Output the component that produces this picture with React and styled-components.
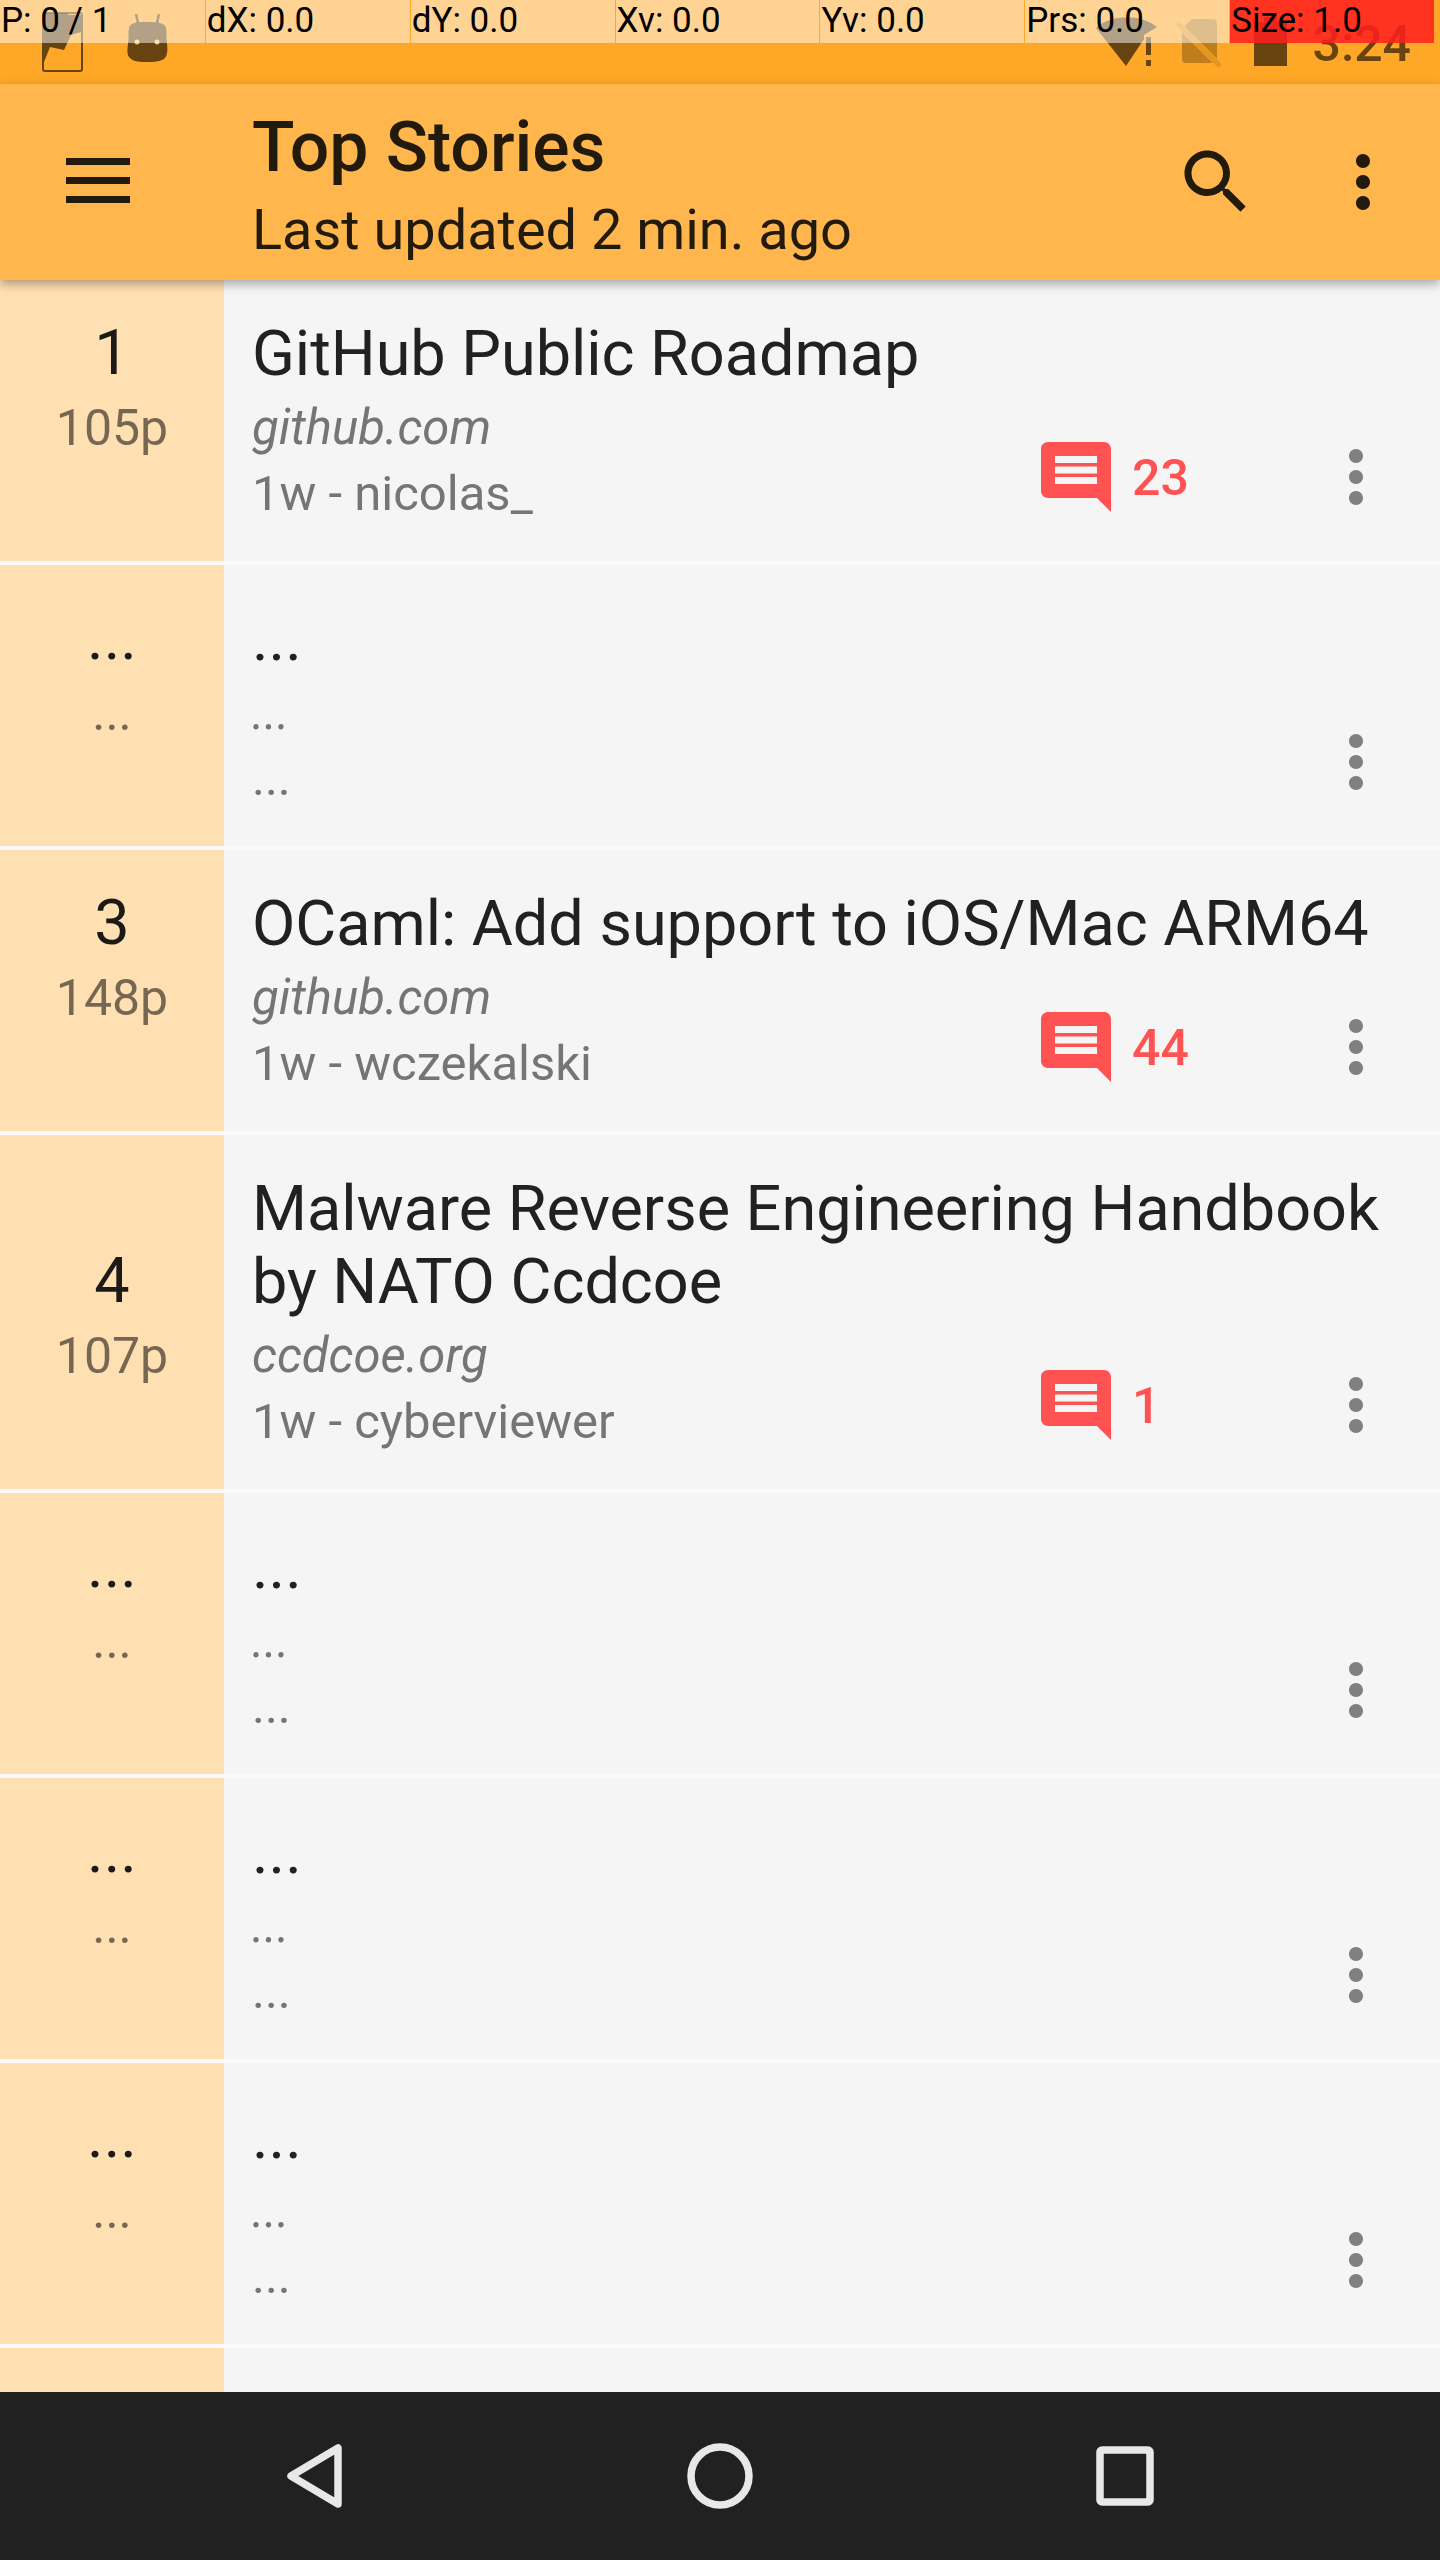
import React from "react";
import styled, { createGlobalStyle } from "styled-components";

const Global = createGlobalStyle`
  html, body { margin: 0; padding: 0; background: #f5f5f5; }
  * { box-sizing: border-box; }
`;

const Screen = styled.div`
  position: relative;
  width: 1440px;
  height: 2560px;
  overflow: hidden;
  display: flex;
  flex-direction: column;
  font-family: Roboto, "Liberation Sans", sans-serif;
  background: #f5f5f5;
`;

const PointerBar = styled.div`
  position: absolute;
  top: 0;
  left: 0;
  width: 1434px;
  height: 43px;
  display: grid;
  grid-template-columns: repeat(7, 1fr);
  z-index: 5;
`;

const PointerCell = styled.div`
  background: ${(p) => (p.$alert ? "rgba(255,30,30,.85)" : "rgba(255,255,255,.5)")};
  border-left: ${(p) => (p.$first ? "0" : "1px solid #ffa726")};
  color: #000;
  font-size: 35px;
  line-height: 41px;
  padding-left: 1px;
  white-space: nowrap;
  overflow: hidden;
`;

const StatusBar = styled.div`
  height: 84px;
  flex: none;
  background: #ffa726;
  display: flex;
  align-items: flex-start;
  padding: 12px 29px 0 42px;
`;

const StatusIcon = styled.svg`
  display: block;
  flex: none;
  margin-left: ${(p) => p.$ml || 0}px;
  margin-top: ${(p) => p.$mt || 0}px;
`;

const StatusSpacer = styled.div`
  flex: 1;
`;

const Clock = styled.div`
  font-size: 50px;
  font-weight: 500;
  line-height: 50px;
  margin-left: 26px;
  margin-top: 7px;
  color: rgba(0, 0, 0, 0.6);
`;

const AppBar = styled.header`
  height: 196px;
  flex: none;
  background: #ffb74d;
  display: flex;
  align-items: center;
  color: #211a0d;
  padding-left: 56px;
  padding-right: 35px;
  box-shadow: 0 4px 10px rgba(0, 0, 0, 0.32);
  position: relative;
  z-index: 2;
`;

const BarIcon = styled.svg`
  display: block;
  flex: none;
  fill: currentColor;
`;

const Titles = styled.div`
  flex: 1;
  margin-left: 112px;
  padding-top: 9px;
`;

const AppTitle = styled.div`
  font-size: 69.7px;
  font-weight: 500;
  line-height: 78px;
`;

const AppSub = styled.div`
  font-size: 55.9px;
  line-height: 70px;
  margin-top: 9px;
`;

const BarActions = styled.div`
  display: flex;
  gap: 63px;
`;

const List = styled.main`
  flex: 1;
  min-height: 0;
  overflow: hidden;
`;

const Row = styled.article`
  display: flex;
  min-height: 281px;
  border-bottom: 4px solid #fafafa;
  box-sizing: content-box;
`;

const Rank = styled.div`
  width: 224px;
  flex: none;
  background: #ffe0b2;
  display: flex;
  flex-direction: column;
  align-items: center;
  justify-content: flex-end;
  padding-bottom: 100px;
`;

const RankNumber = styled.div`
  font-size: 63px;
  line-height: 74px;
  margin-bottom: 5px;
  color: #1c1a17;
`;

const RankPoints = styled.div`
  font-size: 50px;
  line-height: 66px;
  color: rgba(0, 0, 0, 0.54);
`;

const Body = styled.div`
  flex: 1;
  display: flex;
  flex-direction: column;
  padding: 36.5px 0 34.5px 28px;
`;

const Title = styled.div`
  font-size: 63px;
  line-height: 73px;
  letter-spacing: -0.04px;
  color: #212121;
`;

const Domain = styled.div`
  font-size: 49px;
  font-style: italic;
  line-height: 66px;
  color: #757575;
`;

const Meta = styled.div`
  font-size: 49px;
  line-height: 66px;
  color: #757575;
`;

const Footer = styled.div`
  display: flex;
  align-items: flex-end;
  margin-top: 5px;
`;

const FooterText = styled.div`
  flex: 1;
`;

const Comments = styled.div`
  display: flex;
  align-items: center;
  width: 280px;
  margin-bottom: 7.5px;
`;

const CommentCount = styled.span`
  font-size: 50px;
  font-weight: 500;
  color: #ff5252;
  margin-left: 14px;
  padding-top: 2px;
`;

const RowMenu = styled.svg`
  display: block;
  flex: none;
  fill: #808080;
  margin-right: 42px;
  margin-bottom: 7.5px;
`;

const NavBar = styled.nav`
  height: 168px;
  flex: none;
  background: #212121;
  display: flex;
  align-items: center;
  justify-content: center;
`;

const NavSlots = styled.div`
  display: grid;
  grid-template-columns: 120px 120px 120px;
  column-gap: 285px;
  justify-items: center;
  align-items: center;
`;

const NavIcon = styled.svg`
  display: block;
  flex: none;
  fill: none;
  stroke: #e8e8e8;
  stroke-width: 7.5;
  stroke-linejoin: round;
`;

const MORE =
  "M12 8c1.1 0 2-.9 2-2s-.9-2-2-2-2 .9-2 2 .9 2 2 2zm0 2c-1.1 0-2 .9-2 2s.9 2 2 2 2-.9 2-2-.9-2-2-2zm0 6c-1.1 0-2 .9-2 2s.9 2 2 2 2-.9 2-2-.9-2-2-2z";

const stories = [
  { n: "1", p: "105p", t: ["GitHub Public Roadmap"], d: "github.com", m: "1w - nicolas_", c: "23" },
  { n: "...", p: "...", t: ["..."], d: "...", m: "..." },
  { n: "3", p: "148p", t: ["OCaml: Add support to iOS/Mac ARM64"], d: "github.com", m: "1w - wczekalski", c: "44" },
  { n: "4", p: "107p", t: ["Malware Reverse Engineering Handbook", "by NATO Ccdcoe"], d: "ccdcoe.org", m: "1w - cyberviewer", c: "1" },
  { n: "...", p: "...", t: ["..."], d: "...", m: "..." },
  { n: "...", p: "...", t: ["..."], d: "...", m: "..." },
  { n: "...", p: "...", t: ["..."], d: "...", m: "..." },
  { n: "", p: "", t: [""], d: "", m: "" },
];

const pointer = ["P: 0 / 1", "dX: 0.0", "dY: 0.0", "Xv: 0.0", "Yv: 0.0", "Prs: 0.0", "Size: 1.0"];

const INK = "rgba(0,0,0,.6)";

export default function App() {
  return (
    <Screen>
      <Global />
      <PointerBar>
        {pointer.map((t, i) => (
          <PointerCell key={t} $first={i === 0} $alert={i === 6}>{t}</PointerCell>
        ))}
      </PointerBar>
      <StatusBar>
        <StatusIcon width="41" height="60" viewBox="0 0 41 60">
          <rect x="1" y="1" width="39" height="58" rx="2" fill="none" stroke={INK} strokeWidth="2" />
          <path d="M2 50 L8 35 L22 38 L29 23 L39 20 L39 3 L27 3 L25 1 L2 1 Z" fill={INK} />
        </StatusIcon>
        <StatusIcon $ml={44} $mt={2} width="41" height="48" viewBox="0 0 41 48">
          <path d="M9 0 L11 9 M32 0 L30 9" stroke={INK} strokeWidth="2.500" />
          <path d="M20.500 8 C32 8 38 9 39 14 C40 20 39 24 40 30 C41 36 40 42 38 44 C34 48 26 48 20.500 48 C14 48 6 48 3 44 C0 42 0 36 1 30 C2 24 1 20 2 14 C3 9 8 8 20.500 8 Z" fill={INK} />
          <circle cx="10" cy="28" r="2.500" fill="#ffc766" />
          <circle cx="30" cy="28" r="2.500" fill="#ffc766" />
        </StatusIcon>
        <StatusSpacer />
        <StatusIcon $mt={5} width="61" height="49" viewBox="0 0 61 49">
          <path d="M0 11 C15 -3 45 -3 61 10 L48 18 L48 22 L30 49 Z" fill={INK} />
          <rect x="50" y="20" width="5" height="18" fill={INK} />
          <rect x="50" y="43" width="5" height="6" fill={INK} />
        </StatusIcon>
        <StatusIcon $ml={19} $mt={7} width="46" height="48" viewBox="0 0 46 48">
          <path d="M16 0 H37 Q41 0 41 4 V40 Q41 44 37 44 H10 Q6 44 6 40 V10 Z" fill="rgba(0,0,0,.25)" />
          <path d="M1 4 L44 47" stroke="#ffa726" strokeWidth="6" />
          <path d="M1 4 L44 47" stroke="rgba(0,0,0,.1)" strokeWidth="5" />
        </StatusIcon>
        <StatusIcon $ml={32} $mt={5} width="33" height="49" viewBox="0 0 33 49">
          <path d="M10 0 H23 V5 H33 V49 H0 V5 H10 Z" fill={INK} />
        </StatusIcon>
        <Clock>3:24</Clock>
      </StatusBar>
      <AppBar>
        <BarIcon width="84" height="84" viewBox="0 0 84 84">
          <path d="M10 18h64v7H10z M10 37h64v7H10z M10 56h64v7H10z" />
        </BarIcon>
        <Titles>
          <AppTitle>Top Stories</AppTitle>
          <AppSub>Last updated 2 min. ago</AppSub>
        </Titles>
        <BarActions>
          <BarIcon width="84" height="84" viewBox="0 0 24 24">
            <path d="M15.5 14h-.79l-.28-.27C15.410 12.590 16 11.110 16 9.500 16 5.910 13.090 3 9.500 3S3 5.910 3 9.500 5.910 16 9.500 16c1.610 0 3.090-.59 4.230-1.570l.27.28v.79l5 4.990L20.490 19l-4.990-5zm-6 0C7.010 14 5 11.990 5 9.500S7.010 5 9.500 5 14 7.010 14 9.500 11.990 14 9.500 14z" />
          </BarIcon>
          <BarIcon width="84" height="84" viewBox="0 0 24 24">
            <path d={MORE} />
          </BarIcon>
        </BarActions>
      </AppBar>
      <List>
        {stories.map((s, i) => (
          <Row key={i}>
            <Rank>
              <RankNumber>{s.n || "\u00a0"}</RankNumber>
              <RankPoints>{s.p || "\u00a0"}</RankPoints>
            </Rank>
            <Body>
              {s.t.map((l, j) => (
                <Title key={j}>{l}</Title>
              ))}
              <Footer>
                <FooterText>
                  <Domain>{s.d}</Domain>
                  <Meta>{s.m}</Meta>
                </FooterText>
                {s.c && (
                  <Comments>
                    <svg width="84" height="84" viewBox="0 0 24 24" fill="#ff5252">
                      <path d="M21.990 4c0-1.100-.89-2-1.990-2H4c-1.100 0-2 .9-2 2v12c0 1.100.9 2 2 2h14l4 4-.01-18zM18 14H6v-2h12v2zm0-3H6V9h12v2zm0-3H6V6h12v2z" />
                    </svg>
                    <CommentCount>{s.c}</CommentCount>
                  </Comments>
                )}
                {s.m && (
                  <RowMenu width="84" height="84" viewBox="0 0 24 24">
                    <path d={MORE} />
                  </RowMenu>
                )}
              </Footer>
            </Body>
          </Row>
        ))}
      </List>
      <NavBar>
        <NavSlots>
          <NavIcon width="60" height="70" viewBox="0 0 60 70">
            <path d="M53 7 V63 L6 35 Z" />
          </NavIcon>
          <NavIcon width="66" height="66" viewBox="0 0 66 66">
            <circle cx="33" cy="33" r="29" />
          </NavIcon>
          <NavIcon width="58" height="60" viewBox="0 0 58 60">
            <rect x="4" y="4" width="50" height="52" rx="2" />
          </NavIcon>
        </NavSlots>
      </NavBar>
    </Screen>
  );
}
